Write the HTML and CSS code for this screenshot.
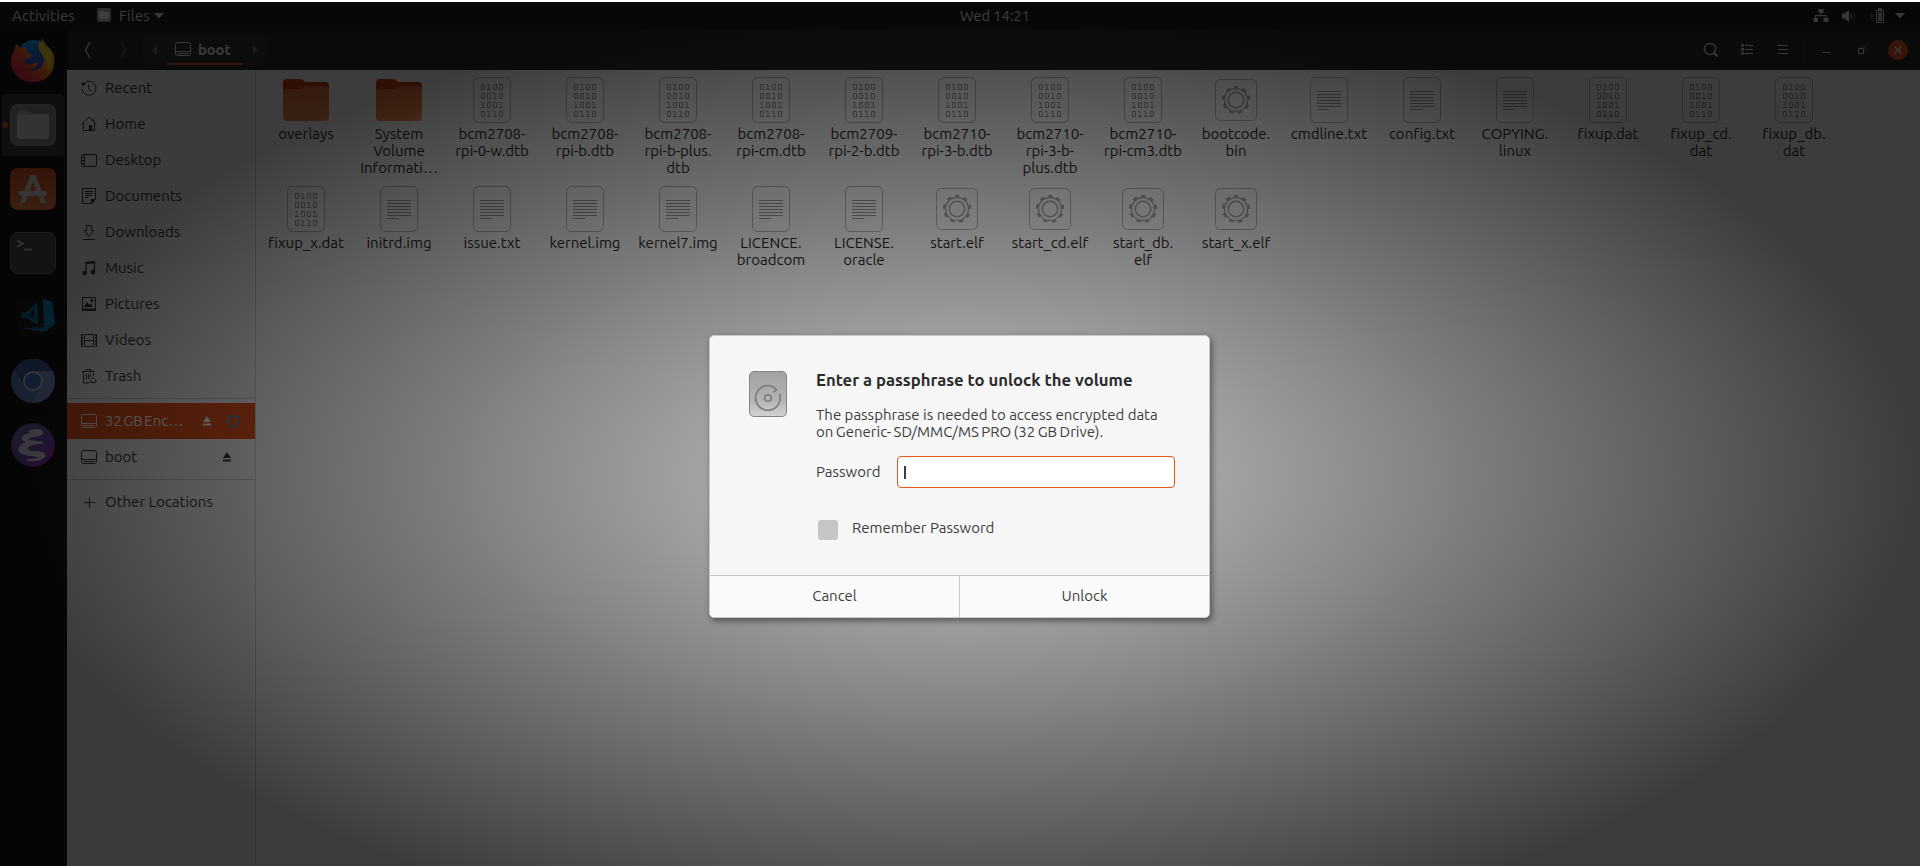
FILE: index.html
```html
<!DOCTYPE html>
<html lang="en">
<head>
<meta charset="utf-8">
<title>Files - boot</title>
<link rel="stylesheet" href="styles.css">
</head>
<body>
<svg class="defs" width="0" height="0" aria-hidden="true">
  <defs>
    <linearGradient id="gFolder" x1="0" y1="0" x2="0" y2="1"><stop offset="0" stop-color="#d96f35"/><stop offset="1" stop-color="#e8864c"/></linearGradient>
    <linearGradient id="gFox" x1="1" y1="0" x2="0" y2="1"><stop offset="0" stop-color="#fff044"/><stop offset=".35" stop-color="#ffa41c"/><stop offset=".62" stop-color="#ff4a33"/><stop offset="1" stop-color="#d8127c"/></linearGradient>
    <linearGradient id="gGlobe" x1="0" y1="0" x2="0" y2="1"><stop offset="0" stop-color="#1aa7ff"/><stop offset="1" stop-color="#3b2fa8"/></linearGradient>
    <linearGradient id="gSoft" x1="0" y1="0" x2="0" y2="1"><stop offset="0" stop-color="#d9501f"/><stop offset="1" stop-color="#ee8048"/></linearGradient>
    <linearGradient id="gEmacs" x1="0" y1="0" x2="1" y2="1"><stop offset="0" stop-color="#7b6bc0"/><stop offset=".5" stop-color="#6f4fae"/><stop offset="1" stop-color="#a32bbf"/></linearGradient>
    <linearGradient id="gDisk" x1="0" y1="0" x2="0" y2="1"><stop offset="0" stop-color="#a2a2a2"/><stop offset=".65" stop-color="#b4b4b4"/><stop offset="1" stop-color="#d4d4d4"/></linearGradient>
  </defs>
  <symbol id="folder" viewBox="0 0 48 48">
    <path d="M1 7a4 4 0 0 1 4-4h13c3 0 4 3 6 3h19a4 4 0 0 1 4 4v20H1z" fill="#c8380c"/>
    <path d="M1 17a4 4 0 0 1 4-4h13c3 0 4-3 7-3h18a4 4 0 0 1 4 4v27a4 4 0 0 1-4 4H5a4 4 0 0 1-4-4z" fill="url(#gFolder)"/>
    <path d="M47 33v8a4 4 0 0 1-4 4h-8z" fill="#f6a878" opacity=".35"/>
  </symbol>
  <symbol id="binary" viewBox="0 0 48 48">
    <rect x="5.500" y="1.500" width="37" height="45" rx="5" class="paper"/>
    <g fill="none" stroke="#999">
      <path d="M13.500 8.500h3v5h-3zM19 8.500h2v5M19 13.500h4M25.500 8.500h3v5h-3zM31.500 8.500h3v5h-3z"/>
      <path d="M13.500 17.500h3v5h-3zM19.500 17.500h3v5h-3zM25 17.500h2v5M25 22.500h4M31.500 17.500h3v5h-3z"/>
      <path d="M13 26.500h2v5M13 31.500h4M19.500 26.500h3v5h-3zM25.500 26.500h3v5h-3zM31 26.500h2v5M31 31.500h4"/>
      <path d="M13.500 35.500h3v5h-3zM19 35.500h2v5M19 40.500h4M25 35.500h2v5M25 40.500h4M31.500 35.500h3v5h-3z"/>
    </g>
  </symbol>
  <symbol id="text" viewBox="0 0 48 48">
    <rect x="5.500" y="1.500" width="37" height="45" rx="5" class="paper"/>
    <path d="M12 15.500h24M12 18.500h24M12 21.500h24M12 24.500h24M12 27.500h24M12 30.500h24M12 33.500h12" stroke="#999" fill="none"/>
  </symbol>
  <symbol id="gear" viewBox="0 0 48 48">
    <rect x="3.500" y="3.500" width="41" height="41" rx="5" class="paper"/>
    <g fill="none" stroke="#a6a6a6">
      <circle cx="24" cy="24" r="11.500" stroke-width="1.300"/>
      <circle cx="24" cy="24" r="13" stroke-width="2.200" stroke-dasharray="4.500 4.576" stroke-dashoffset="2.250" transform="rotate(-90 24 24)"/>
      <circle cx="24" cy="24" r="7.700" stroke-width="1.500"/>
    </g>
  </symbol>
  <symbol id="drive" viewBox="0 0 16 16">
    <path d="M2.500 1.500h11a2 2 0 0 1 2 2v9a2 2 0 0 1-2 2h-11a2 2 0 0 1-2-2v-9a2 2 0 0 1 2-2zM.5 10.500h15M2.500 12.500h11" class="ln"/>
  </symbol>
  <symbol id="eject" viewBox="0 0 16 16"><path d="M8 3l4 6H4zM4 10.500h8v2H4z" fill="currentColor"/></symbol>
</svg>

<div class="screen">
  <header class="panel">
    <span class="activities">Activities</span>
    <svg class="app-mark" width="14" height="14" viewBox="0 0 14 14"><rect width="14" height="14" rx="2.500" fill="#b5b2aa"/><path d="M2 3h4l1 1h5v7H2z" fill="#fff"/></svg>
    <span class="app-name">Files</span>
    <svg class="caret" width="10" height="6" viewBox="0 0 10 6"><path d="M0 0h10L5 5.500z" fill="currentColor"/></svg>
    <span class="clock">Wed 14:21</span>
    <div class="tray">
      <svg width="16" height="16" viewBox="0 0 16 16"><path d="M5.500 1h5v4H8.500v2H13.500v3h2v4h-5v-4h2V8.200H3V10h2v4H.5v-4H2V7h5.500V5h-2z" fill="currentColor"/></svg>
      <svg width="16" height="16" viewBox="0 0 16 16"><path d="M1 5.500h2.500L8 2v12L3.500 10.500H1z" fill="currentColor"/><path d="M9.500 5.500q2 2.500 0 5" class="ln"/><path d="M12 3.500q3.500 4.500 0 9" class="ln faint"/></svg>
      <svg width="16" height="16" viewBox="0 0 16 16"><path d="M3 4L1 9h1.500L2 12l2.500-5H3z" fill="currentColor" opacity=".5"/><path d="M7.500 2.500h7v12h-7z" class="ln"/><path d="M9 1h4" class="ln bold"/><path d="M9 4h4v9H9z" fill="currentColor" opacity=".8"/></svg>
      <svg class="caret" width="10" height="6" viewBox="0 0 10 6"><path d="M0 0h10L5 5.500z" fill="currentColor"/></svg>
    </div>
  </header>

  <div class="desktop">
    <nav class="dock">
      <div class="launcher firefox"><svg width="48" height="48" viewBox="0 0 48 48">
        <circle cx="24.500" cy="21" r="17" fill="url(#gGlobe)"/>
        <path d="M7 8c2 1 3 2 4 4 2-1 5-1 7 0l-1 3 6 3-2 4-5 1c-1 3 1 5 4 5 4 1 5-2 9-1-2 6-7 8-12 6 7 4 17 1 18-9 0-6-6-8-5-14 1-4 3-6 4-7 0 4 4 6 7 10 4 4 5 9 4 15-1 11-10 18-21 18C11 46 2 37 2 26c0-5 1-8 4-12 0-2 0-4 1-6z" fill="url(#gFox)"/>
        <path d="M31 3c0 4 4 6 7 10 7 7 5 17 1 22 1-8-2-12-5-16-3-3-7-8-3-16z" fill="#ffe22e" opacity=".75"/></svg></div>
      <div class="launcher active"><svg width="48" height="48" viewBox="0 0 48 48">
        <rect x="1" y="3" width="46" height="42" rx="8" fill="#a29d93"/><rect x="2" y="4" width="44" height="40" rx="7" fill="#8f8b80"/>
        <path d="M8 13q0-3 3-3h9l3.500 3.500H37q3 0 3 3V20H8z" fill="#b9b6b0"/><path d="M8 16q0-2 2-2h11l2-1h14q3 0 3 3v19q0 3-3 3H11q-3 0-3-3z" fill="#d6d5d2"/></svg></div>
      <div class="launcher"><svg width="48" height="48" viewBox="0 0 48 48">
        <rect x="1" y="3" width="46" height="42" rx="8" fill="url(#gSoft)"/>
        <path d="M21.500 10h5L37 38h-5l-3.200-8H19.200L16 38h-5zM24 16.500L20.500 26h7z" fill="#dedad6" fill-rule="evenodd"/><rect x="10" y="26" width="28" height="5" rx="2.500" fill="#dedad6"/></svg></div>
      <div class="launcher"><svg width="48" height="48" viewBox="0 0 48 48">
        <rect x="1.500" y="3.500" width="45" height="41" rx="7.500" fill="#4e4e4e" stroke="#777"/>
        <path d="M8 11.500l6 3-6 3M15 20.500h8" stroke="#ddd" stroke-width="1.500" fill="none"/></svg></div>
      <div class="launcher"><svg width="48" height="48" viewBox="0 0 48 48">
        <path d="M5.500 6.500L37 2l-2 40-24 3z" fill="#1c1c1c"/>
        <path d="M34 6l9 3 3 22-11 8-22-4 22-1z" fill="#1078b0"/><path d="M34 6l9 3 3 22-9 7z" fill="#1486c4"/><path d="M13 20l14 9V13L13 25" stroke="#0f74ad" stroke-width="3.500" fill="none"/></svg></div>
      <div class="launcher"><svg width="48" height="48" viewBox="0 0 48 48">
        <circle cx="24" cy="24" r="22" fill="#6488c8"/><path d="M24 2a22 22 0 0 0-18.500 10L15 29l9-15h19.600A22 22 0 0 0 24 2z" fill="#3d62ab"/><path d="M43.600 14H24l9 15-10 17a22 22 0 0 0 20.600-32z" fill="#8198c8"/>
        <circle cx="24" cy="24" r="10" fill="#d5dae6"/><circle cx="24" cy="24" r="8" fill="#4577cb"/></svg></div>
      <div class="launcher"><svg width="48" height="48" viewBox="0 0 48 48">
        <circle cx="24" cy="24" r="21.500" fill="url(#gEmacs)" stroke="#6a3d9c"/>
        <path d="M20 11c5-3 12-3 13 0 1 2-3 4-7 4-6 1-8 3-7 4 2 2 11 1 15 3-4 0-15 1-16 5-1 3 5 4 10 4 7 0 9 3 7 5-3 3-10 4-17 3 7 0 13-2 12-3-2-2-19-1-20-7 0-5 5-7 9-8-5-1-7-4-4-6 2-2 6-2 9-3 2 0 1-2-4-1z" fill="#dfdce8" stroke="#dfdce8" stroke-width="1.500"/></svg></div>
    </nav>

    <main class="window">
      <div class="headerbar">
        <svg class="nav-arrow" width="8" height="18" viewBox="0 0 8 18"><path d="M6 1L1.500 9 6 17" class="ln wide"/></svg>
        <svg class="nav-arrow off" width="8" height="18" viewBox="0 0 8 18"><path d="M2 1l4.500 8L2 17" class="ln wide"/></svg>
        <div class="pathbar">
          <svg class="off" width="5" height="10" viewBox="0 0 5 10"><path d="M5 0v10L0 5z" fill="currentColor"/></svg>
          <div class="crumb"><svg width="16" height="16"><use href="#drive"/></svg><b>boot</b></div>
          <svg class="off" width="5" height="10" viewBox="0 0 5 10"><path d="M0 0v10l5-5z" fill="currentColor"/></svg>
        </div>
        <div class="tools">
          <svg width="16" height="16" viewBox="0 0 16 16"><circle cx="7" cy="7" r="5.600" class="ln wide"/><path d="M11 11l3.500 3.500" class="ln bold"/></svg>
          <svg width="16" height="16" viewBox="0 0 16 16"><path d="M2.500 2.500h2v2h-2zM2.500 6.500h2v2h-2zM2.500 10.500h2v2h-2zM6 3.500h8M6 7.500h8M6 11.500h8" class="ln"/></svg>
          <svg width="16" height="16" viewBox="0 0 16 16"><path d="M3 3.500h10M3 7.500h10M3 11.500h10" class="ln"/></svg>
          <span class="tool-sep"></span>
          <svg width="16" height="16" viewBox="0 0 16 16"><path d="M4 10.500h8" class="ln"/></svg>
          <svg width="16" height="16" viewBox="0 0 16 16"><path d="M4.500 6.500h5v5h-5z" class="ln"/><path d="M6 4.500h5.500V10" class="ln faint"/></svg>
          <svg class="close" width="20" height="20" viewBox="0 0 20 20"><circle cx="10" cy="10" r="10" fill="#e95420"/><path d="M6.500 6.500l7 7M13.500 6.500l-7 7" class="ln wide"/></svg>
        </div>
      </div>

      <div class="body">
        <aside class="sidebar">
          <div class="place"><svg width="16" height="16" viewBox="0 0 16 16"><path d="M2.200 4.300A7 7 0 1 1 1 9" class="ln"/><path d="M0 2.500l5 .5-3 3.500z" fill="currentColor"/><path d="M7.500 4.500V9l2.500 2" class="ln"/></svg><span>Recent</span></div>
          <div class="place"><svg width="16" height="16" viewBox="0 0 16 16"><path d="M.7 8.500L8 1l7.300 7.500M2.500 7v7.500h11V7M12.500 5V2" class="ln"/><path d="M8 9h3v5.500H8z" fill="currentColor"/></svg><span>Home</span></div>
          <div class="place"><svg width="16" height="16" viewBox="0 0 16 16"><path d="M2 2.500h12a1.500 1.500 0 0 1 1.500 1.500v9a1.500 1.500 0 0 1-1.500 1.500H2A1.500 1.500 0 0 1 .5 13V4A1.500 1.500 0 0 1 2 2.500zM3.500 2.500v12M1 5.500h2.500M1 8.500h2.500M1 11.500h2.500" class="ln"/></svg><span>Desktop</span></div>
          <div class="place"><svg width="16" height="16" viewBox="0 0 16 16"><path d="M1.500.5h13V11L11 15.500H1.500zM4 3.500h8M4 5.500h8M4 7.500h7M4 9.500h3" class="ln"/><path d="M10 15.500v-4.500h4.500z" fill="currentColor"/></svg><span>Documents</span></div>
          <div class="place"><svg width="16" height="16" viewBox="0 0 16 16"><path d="M5.500 1.500h5v5h2.200L8 12.500 3.300 6.500h2.200zM2 15.500h12" class="ln"/></svg><span>Downloads</span></div>
          <div class="place"><svg width="16" height="16" viewBox="0 0 16 16"><path d="M5 13V2.500l8.500-1V12M5 3.500l8.500-1" class="ln wide"/><circle cx="3.500" cy="13" r="2.200" fill="currentColor"/><circle cx="12" cy="12" r="2.200" fill="currentColor"/></svg><span>Music</span></div>
          <div class="place"><svg width="16" height="16" viewBox="0 0 16 16"><path d="M1.500 1.500h13v12h-13z" class="ln"/><path d="M1 12.500h14v2.500H1zM3 11l3-5 2 3 1.500-2L12 11z" fill="currentColor"/><circle cx="11" cy="4.500" r="1.500" fill="currentColor"/></svg><span>Pictures</span></div>
          <div class="place"><svg width="16" height="16" viewBox="0 0 16 16"><path d="M1.500 2v13M14.500 2v13" class="ln" stroke-dasharray="2 1"/><path d="M3.500 2.500h9v12h-9zM3.500 8.500h9M.5 2v13M15.500 2v13" class="ln"/></svg><span>Videos</span></div>
          <div class="place"><svg width="16" height="16" viewBox="0 0 16 16"><path d="M1 3.500h13M5 3V1.500h5V3M2.500 4v11H8M5.500 6v6M7.500 6v5M9.500 6v3M12.500 5v3" class="ln"/><path d="M9.800 14.500a1.800 1.800 0 0 1 .4-3L12 9.500l2 2a1.800 1.800 0 0 1 .4 3z" class="ln"/></svg><span>Trash</span></div>
          <hr>
          <div class="place selected"><svg width="16" height="16"><use href="#drive"/></svg><span class="dev">32 GB Enc…</span><svg width="16" height="16"><use href="#eject"/></svg>
            <svg class="busy" width="16" height="16" viewBox="0 0 16 16"><circle cx="8" cy="8" r="5.300" fill="none" stroke="#23a5cc" stroke-width="1.900" stroke-dasharray="5 1.660"/></svg></div>
          <div class="place"><svg width="16" height="16"><use href="#drive"/></svg><span class="dev vol">boot</span><svg width="16" height="16"><use href="#eject"/></svg></div>
          <hr>
          <div class="place"><svg width="16" height="16" viewBox="0 0 16 16"><path d="M8.500 3v11M3 8.500h11" class="ln"/></svg><span>Other Locations</span></div>
        </aside>

        <section class="files">
          <div class="file"><svg width="48" height="48"><use href="#folder"/></svg><span>overlays</span></div>
          <div class="file"><svg width="48" height="48"><use href="#folder"/></svg><span>System<br>Volume<br>Informati…</span></div>
          <div class="file"><svg width="48" height="48"><use href="#binary"/></svg><span>bcm2708-<br>rpi-0-w.dtb</span></div>
          <div class="file"><svg width="48" height="48"><use href="#binary"/></svg><span>bcm2708-<br>rpi-b.dtb</span></div>
          <div class="file"><svg width="48" height="48"><use href="#binary"/></svg><span>bcm2708-<br>rpi-b-plus.<br>dtb</span></div>
          <div class="file"><svg width="48" height="48"><use href="#binary"/></svg><span>bcm2708-<br>rpi-cm.dtb</span></div>
          <div class="file"><svg width="48" height="48"><use href="#binary"/></svg><span>bcm2709-<br>rpi-2-b.dtb</span></div>
          <div class="file"><svg width="48" height="48"><use href="#binary"/></svg><span>bcm2710-<br>rpi-3-b.dtb</span></div>
          <div class="file"><svg width="48" height="48"><use href="#binary"/></svg><span>bcm2710-<br>rpi-3-b-<br>plus.dtb</span></div>
          <div class="file"><svg width="48" height="48"><use href="#binary"/></svg><span>bcm2710-<br>rpi-cm3.dtb</span></div>
          <div class="file"><svg width="48" height="48"><use href="#gear"/></svg><span>bootcode.<br>bin</span></div>
          <div class="file"><svg width="48" height="48"><use href="#text"/></svg><span>cmdline.txt</span></div>
          <div class="file"><svg width="48" height="48"><use href="#text"/></svg><span>config.txt</span></div>
          <div class="file"><svg width="48" height="48"><use href="#text"/></svg><span>COPYING.<br>linux</span></div>
          <div class="file"><svg width="48" height="48"><use href="#binary"/></svg><span>fixup.dat</span></div>
          <div class="file"><svg width="48" height="48"><use href="#binary"/></svg><span>fixup_cd.<br>dat</span></div>
          <div class="file"><svg width="48" height="48"><use href="#binary"/></svg><span>fixup_db.<br>dat</span></div>
          <div class="file"><svg width="48" height="48"><use href="#binary"/></svg><span>fixup_x.dat</span></div>
          <div class="file"><svg width="48" height="48"><use href="#text"/></svg><span>initrd.img</span></div>
          <div class="file"><svg width="48" height="48"><use href="#text"/></svg><span>issue.txt</span></div>
          <div class="file"><svg width="48" height="48"><use href="#text"/></svg><span>kernel.img</span></div>
          <div class="file"><svg width="48" height="48"><use href="#text"/></svg><span>kernel7.img</span></div>
          <div class="file"><svg width="48" height="48"><use href="#text"/></svg><span>LICENCE.<br>broadcom</span></div>
          <div class="file"><svg width="48" height="48"><use href="#text"/></svg><span>LICENSE.<br>oracle</span></div>
          <div class="file"><svg width="48" height="48"><use href="#gear"/></svg><span>start.elf</span></div>
          <div class="file"><svg width="48" height="48"><use href="#gear"/></svg><span>start_cd.elf</span></div>
          <div class="file"><svg width="48" height="48"><use href="#gear"/></svg><span>start_db.<br>elf</span></div>
          <div class="file"><svg width="48" height="48"><use href="#gear"/></svg><span>start_x.elf</span></div>
        </section>
      </div>
    </main>
  </div>
</div>

<div class="shade"></div>

<div class="dialog" role="dialog">
  <div class="dialog-body">
    <svg class="disk" width="38" height="46" viewBox="0 0 38 46"><rect x=".5" y=".5" width="37" height="45" rx="4.500" fill="url(#gDisk)" stroke="#858585"/><circle cx="19" cy="27" r="3.300" fill="none" stroke="#7c7c7c" stroke-width="1.600"/><path d="M30.500 22.800A12.300 12.300 0 1 1 23.500 15.500L27.500 18.500 24.500 21.500" fill="none" stroke="#7c7c7c" stroke-width="1.600"/></svg>
    <div class="prompt">
      <h1>Enter a passphrase to unlock the volume</h1>
      <p>The passphrase is needed to access encrypted data<br><span class="device">on Generic- SD/MMC/MS PRO (32 GB Drive).</span></p>
      <div class="field"><span class="label">Password</span><div class="entry"><i></i></div></div>
      <div class="remember"><span class="check"></span><span class="remember-text">Remember Password</span></div>
    </div>
  </div>
  <div class="actions"><div>Cancel</div><div>Unlock</div></div>
</div>
</body>
</html>
```
FILE: styles.css
```css
* { box-sizing: border-box; }

body {
  margin: 0;
  width: 1920px;
  height: 866px;
  overflow: hidden;
  background: #fff;
  font: 15px/17px Ubuntu, "Noto Sans", sans-serif;
  font-variant-ligatures: none;
  color: #2d2d2d;
}

svg { display: block; flex: none; }
.defs { position: absolute; }
.ln { fill: none; stroke: currentColor; stroke-width: 1; }
.wide { stroke-width: 1.3; }
.bold { stroke-width: 1.8; }
.faint { opacity: .45; }
.off { opacity: .35; }
.paper { fill: #fafafa; fill-opacity: .25; stroke: #b4b4b4; }

.screen { height: 866px; padding-top: 2px; display: flex; flex-direction: column; }

/* Top panel */
.panel {
  height: 28px;
  flex: none;
  display: grid;
  grid-template-columns: 85px 22px 35px 806px 1fr auto;
  align-items: center;
  padding: 0 15px 0 12px;
  background: #1c1c1c;
  color: #e6e6e6;
}
.panel > span { padding-bottom: 2px; }
.activities, .app-name { letter-spacing: .15px; }
.app-mark { margin-top: -2px; }
.clock { font-size: 14.667px; }
.tray { display: flex; align-items: center; gap: 12px; }
.tray .caret { margin-left: -2px; }

.desktop { flex: 1; display: flex; min-height: 0; }

/* Dock */
.dock { width: 67px; background: #151515; }
.launcher { height: 62px; width: 62px; margin: 0 0 2px 2px; padding: 7px; border-radius: 4px; position: relative; }
.launcher.firefox { padding-top: 6px; }
.launcher.active { background: #3d3d3d; }
.launcher.active::before {
  content: "";
  position: absolute;
  left: 0;
  top: 28px;
  width: 6px;
  height: 6px;
  border-radius: 50%;
  background: #e95420;
}

/* Window */
.window { flex: 1; display: flex; flex-direction: column; }
.headerbar { height: 40px; display: flex; align-items: center; background: #2b2b2b; color: #eee; padding: 0 12px 0 17px; }
.nav-arrow { margin-right: 27px; }
.pathbar {
  height: 30px;
  width: 125px;
  margin-left: -11px;
  padding: 0 10px 0 9px;
  display: flex;
  align-items: center;
  justify-content: space-between;
  background: #343434;
  border-radius: 5px;
}
.crumb { display: flex; gap: 7px; align-items: center; width: 76px; height: 30px; padding-left: 8px; border-bottom: 2px solid #e95420; }
.crumb b { font-size: 14.667px; }
.tools { margin-left: auto; display: flex; align-items: center; gap: 20px; }
.tool-sep { width: 1px; height: 24px; margin: 0 -7px 0 -14px; background: #3a3a3a; }
.tool-sep { margin-right: -7px; margin-left: -7px; }
.close { margin-left: -2px; }

.body { flex: 1; display: flex; background: #fafafa; }

.sidebar { width: 189px; background: #f5f6f5; border-right: 1px solid #cfcfcf; }
.place { height: 36px; display: flex; align-items: center; gap: 8px; padding-left: 14px; color: #3a3a3a; white-space: nowrap; }
.place > span { padding-bottom: 2px; }
.place .dev { width: 86px; word-spacing: -2px; }
.place .dev.vol { width: 106px; }
.place .busy { margin-left: 2px; }
.place.selected { background: #e95420; color: #fff; }
.sidebar hr { height: 1px; margin: 4px 0; border: 0; background: #cfcfcf; }

.files {
  display: grid;
  grid-template-columns: repeat(17, 93px);
  grid-auto-rows: 109px;
  align-content: start;
  padding: 6px 0 0 3px;
}
.file { display: flex; flex-direction: column; align-items: center; gap: 1px; text-align: center; color: #2a2a2a; white-space: nowrap; }
.file span { padding-left: 1px; }

/* Vignette behind the modal */
.shade {
  position: absolute;
  left: 0;
  top: 2px;
  width: 1920px;
  height: 864px;
  background: radial-gradient(ellipse 960px 475px at 960px 474px, rgba(0, 0, 0, .2), rgba(0, 0, 0, .76));
}

/* Dialog */
.dialog {
  position: absolute;
  left: 709px;
  top: 335px;
  width: 501px;
  height: 283px;
  display: flex;
  flex-direction: column;
  border: 1px solid #c8c8c8;
  border-radius: 5px;
  background: #f6f6f6;
  box-shadow: 2px 3px 6px rgba(0, 0, 0, .45);
  color: #3d3d3d;
  overflow: hidden;
}
.dialog-body { flex: 1; display: flex; gap: 29px; padding: 35px 34px 0 39px; }
.prompt { flex: 1; }
.prompt h1 { margin: -1px 0 0; font-size: 16.667px; line-height: 20px; color: #2b2b2b; white-space: nowrap; }
.prompt p { margin: 16px 0; white-space: nowrap; }
.device { word-spacing: -1px; }
.field { display: flex; align-items: center; justify-content: space-between; }
.label { padding-bottom: 2px; }
.entry { width: 278px; height: 32px; padding: 9px 6px; border: 1px solid #e95420; border-radius: 4px; background: #fff; }
.entry i { display: block; width: 2px; height: 13px; background: #3d3d3d; }
.remember { display: flex; gap: 14px; padding: 31px 0 0 2px; }
.check { width: 20px; height: 20px; margin-top: 1px; border-radius: 3px; background: #c5c5c5; }
.actions { height: 42px; display: grid; grid-template-columns: 249px 1fr; border-top: 1px solid #c8c8c8; background: #fafafa; text-align: center; line-height: 39px; }
.actions div + div { border-left: 1px solid #c8c8c8; }
```
